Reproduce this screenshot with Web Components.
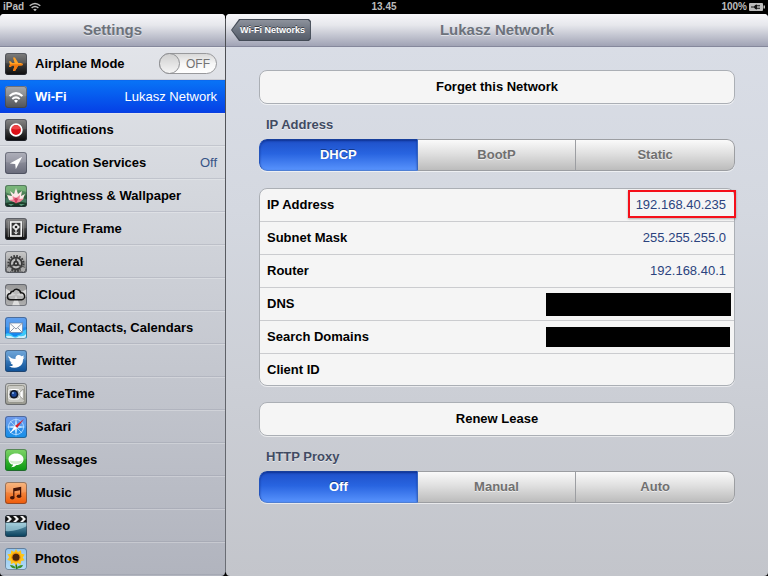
<!DOCTYPE html>
<html lang="en">
<head>
<meta charset="utf-8">
<title>Settings</title>
<style>
  html, body { height: 100%; margin: 0; }
  body {
    display: flex;
    flex-direction: column;
    overflow: hidden;
    background: #000;
    color: #000;
    font: 13px/16px "Liberation Sans", Arial, sans-serif;
  }
  .panes {
    flex: 1;
    min-height: 0;
    display: grid;
    grid-template-columns: 225px 1fr;
    gap: 1px;
    background: linear-gradient(#000 4px, #4b4d52 5px, #6b6e75 calc(100% - 4px), #000 calc(100% - 3px));
  }
</style>
</head>
<body>

<status-bar device="iPad" time="13.45" battery="100%"></status-bar>

<div class="panes">
  <settings-pane class="side" heading="Settings">
    <nav aria-label="Settings">
      <menu-row icon="airplane" label="Airplane Mode" switch></menu-row>
      <menu-row icon="wifi" label="Wi-Fi" selected>Lukasz Network</menu-row>
      <menu-row icon="notifications" label="Notifications"></menu-row>
      <menu-row icon="location" label="Location Services">Off</menu-row>
      <menu-row icon="wallpaper" label="Brightness &amp; Wallpaper"></menu-row>
      <menu-row icon="frame" label="Picture Frame"></menu-row>
      <menu-row icon="general" label="General"></menu-row>
      <menu-row icon="icloud" label="iCloud"></menu-row>
      <menu-row icon="mail" label="Mail, Contacts, Calendars"></menu-row>
      <menu-row icon="twitter" label="Twitter"></menu-row>
      <menu-row icon="facetime" label="FaceTime"></menu-row>
      <menu-row icon="safari" label="Safari"></menu-row>
      <menu-row icon="messages" label="Messages"></menu-row>
      <menu-row icon="music" label="Music"></menu-row>
      <menu-row icon="video" label="Video"></menu-row>
      <menu-row icon="photos" label="Photos"></menu-row>
    </nav>
  </settings-pane>

  <settings-pane class="detail" heading="Lukasz Network">
    <back-button slot="back">Wi-Fi Networks</back-button>
    <network-form></network-form>
  </settings-pane>
</div>

<template id="status-bar">
  <style>
    :host {
      display: grid;
      grid-template-columns: 1fr auto 1fr;
      align-items: center;
      height: 14px;
      padding: 0 3px;
      background: #000;
      color: #bcbcbc;
      font-size: 10px;
      font-weight: bold;
      line-height: 14px;
    }
    div { display: flex; align-items: center; gap: 5px; }
    .right { justify-content: flex-end; gap: 2px; }
    svg { display: block; }
  </style>
  <div>
    <span class="device"></span>
    <svg width="12" height="10" viewBox="0 0 12 10" fill="none" stroke="#bcbcbc" stroke-width="1.4">
      <path d="M.7 3.8Q6-1 11.3 3.8M2.6 5.9Q6 3 9.4 5.9"/>
      <path d="M4.2 7.4Q6 5.9 7.8 7.4L6 9.3Z" fill="#bcbcbc" stroke="none"/>
    </svg>
  </div>
  <span class="time"></span>
  <div class="right">
    <span class="battery"></span>
    <svg width="16" height="8" viewBox="0 0 16 8">
      <rect width="14" height="8" rx="1" fill="#bcbcbc"/>
      <path d="M14.5 2.5h1.5v3h-1.5z" fill="#bcbcbc"/>
      <path d="M2 3.5h3Q6 1.5 8 1.5V2.3h3v1H8v1.4h3v1H8v.8Q6 6.5 5 4.5H2z" fill="#111"/>
    </svg>
  </div>
</template>

<template id="settings-pane">
  <style>
    :host {
      display: flex;
      flex-direction: column;
      min-width: 0;
      overflow: hidden;
      border-radius: 4px;
      background: linear-gradient(#dadee7, #d4d8e0 35%, #c3c5cb);
    }
    :host(.side) { background: linear-gradient(#e5e7ec, #d5d8de 30%, #b1b4be); }
    header {
      flex: none;
      box-sizing: border-box;
      height: 33px;
      display: grid;
      grid-template-columns: 1fr auto 1fr;
      align-items: center;
      padding: 0 5px;
      border-bottom: 1px solid #85889c;
      background: linear-gradient(#f7f7fa, #e6e7ec 35%, #a0a3b5);
    }
    h1 {
      margin: 0;
      color: #6c727b;
      font-size: 15px;
      line-height: 18px;
      text-shadow: 0 1px 0 rgba(255,255,255,.5);
    }
  </style>
  <header>
    <slot name="back"><span></span></slot>
    <h1></h1>
  </header>
  <slot></slot>
</template>

<template id="back-button">
  <style>
    /* keep the arrow as wide as its text, the header cell is 1fr */
    :host { display: block; justify-self: start; }
    button {
      display: block;
      height: 22px;
      padding: 0;
      border: 0;
      background: #444b57;
      clip-path: polygon(8px 0, calc(100% - 2px) 0, 100% 2px, 100% 20px, calc(100% - 2px) 100%, 8px 100%, 0 50%);
      font: bold 9px/20px "Liberation Sans", Arial, sans-serif;
      color: #fff;
      text-shadow: 0 -1px 0 rgba(0,0,0,.5);
    }
    span {
      display: block;
      margin: 1px;
      padding: 0 5px 0 8px;
      background: linear-gradient(#8d929c, #6d7480 50%, #565d69);
      clip-path: polygon(8px 0, calc(100% - 2px) 0, 100% 2px, 100% 18px, calc(100% - 2px) 100%, 8px 100%, 0 50%);
    }
  </style>
  <button type="button"><span><slot></slot></span></button>
</template>

<template id="menu-row">
  <style>
    :host {
      display: block;
      box-sizing: border-box;
      height: 33px;
      border-top: 1px solid rgba(255,255,255,.25);
      border-bottom: 1px solid rgba(130,135,150,.25);
    }
    :host([selected]) {
      border-color: #0a6af0 transparent #0a3fe0;
      background: linear-gradient(#0873f6, #0541e6);
      color: #fff;
    }
    .row {
      display: flex;
      align-items: center;
      height: 100%;
      padding: 0 8px 0 5px;
      color: inherit;
      text-decoration: none;
    }
    .label { flex: 1; margin-left: 8px; font-weight: bold; white-space: nowrap; }
    .value { color: #385487; }
    :host([selected]) .value { color: #fff; }
  </style>
</template>

<template id="toggle-switch">
  <style>
    :host { display: block; }
    label {
      box-sizing: border-box;
      display: flex;
      align-items: center;
      width: 58px;
      height: 21px;
      border: 1px solid #98999c;
      border-radius: 11px;
      background: linear-gradient(#d8d8d8, #f6f6f6 50%, #fff);
      color: #737373;
      font-size: 12px;
    }
    input {
      appearance: none;
      flex: none;
      width: 21px;
      height: 21px;
      margin: 0 0 0 -1px;
      border: 1px solid #8f9093;
      border-radius: 50%;
      background: linear-gradient(#cfcfcf, #f5f5f5);
    }
    span { flex: 1; text-align: center; }
  </style>
  <label><input type="checkbox" role="switch" aria-label="Airplane Mode"><span>OFF</span></label>
</template>

<template id="network-form">
  <style>
    :host { display: block; padding: 23px 33px; }
    card-button { margin-bottom: 12px; }
    h2 {
      margin: 0 7px 6px;
      color: #414b63;
      font-size: 13px;
      line-height: 17px;
      text-shadow: 0 1px 0 rgba(255,255,255,.6);
    }
    .card {
      margin: 17px 0 16px;
      border: 1px solid #abafb5;
      border-radius: 8px;
      background: #f5f5f5;
      box-shadow: 0 1px 0 rgba(255,255,255,.6);
    }
    .blackout { width: 185px; height: 23px; margin-right: -5px; background: #000; }
    .blackout.small { width: 184px; height: 20px; margin-right: -4px; }
    .marked { position: relative; }
    /* marker box over the address */
    .marked::after {
      content: "";
      position: absolute;
      inset: -7px -10px -6px -8px;
      border: 2px solid #f5101a;
      box-shadow: 0 1px 2px rgba(0,0,0,.3);
    }
    input {
      width: 185px;
      padding: 0;
      border: 0;
      background: none;
      font: inherit;
      color: inherit;
      text-align: right;
      outline: none;
    }
  </style>
  <card-button>Forget this Network</card-button>
  <h2>IP Address</h2>
  <segment-control options="DHCP,BootP,Static" label="IP Address"></segment-control>
  <div class="card">
    <field-row label="IP Address"><span class="marked">192.168.40.235</span></field-row>
    <field-row label="Subnet Mask">255.255.255.0</field-row>
    <field-row label="Router">192.168.40.1</field-row>
    <field-row label="DNS"><div class="blackout"></div></field-row>
    <field-row label="Search Domains"><div class="blackout small"></div></field-row>
    <field-row label="Client ID"><input type="text" aria-label="Client ID"></field-row>
  </div>
  <card-button>Renew Lease</card-button>
  <h2>HTTP Proxy</h2>
  <segment-control options="Off,Manual,Auto" label="HTTP Proxy"></segment-control>
</template>

<template id="card-button">
  <style>
    :host { display: block; }
    button {
      display: block;
      width: 100%;
      height: 34px;
      border: 1px solid #abafb5;
      border-radius: 8px;
      background: #f5f5f5;
      box-shadow: 0 1px 0 rgba(255,255,255,.6);
      font: bold 13px/16px "Liberation Sans", Arial, sans-serif;
      color: #000;
    }
  </style>
  <button type="button"><slot></slot></button>
</template>

<template id="field-row">
  <style>
    :host {
      box-sizing: border-box;
      display: flex;
      align-items: center;
      justify-content: space-between;
      height: 33px;
      padding: 0 8px 0 7px;
      border-bottom: 1px solid #cbcccf;
    }
    :host(:last-child) { height: 31px; border-bottom: 0; }
    .label { font-weight: bold; }
    .value { color: #2b437e; }
  </style>
  <span class="label"></span>
  <div class="value"><slot></slot></div>
</template>

<template id="segment-control">
  <style>
    :host { display: block; }
    div {
      display: grid;
      grid-auto-flow: column;
      grid-auto-columns: 1fr;
      height: 32px;
      border-radius: 8px;
      overflow: hidden;
      box-shadow: 0 1px 0 rgba(255,255,255,.6);
    }
    button {
      border: solid #9c9ea2;
      border-width: 1px 1px 1px 0;
      padding: 0;
      background: linear-gradient(#fafafa, #e0e0e0 45%, #bcbcbc);
      color: #707070;
      font: bold 13px/16px "Liberation Sans", Arial, sans-serif;
      text-shadow: 0 1px 0 rgba(255,255,255,.6);
    }
    button:first-child { border-left-width: 1px; border-radius: 8px 0 0 8px; }
    button:last-child { border-radius: 0 8px 8px 0; }
    button[aria-pressed="true"] {
      border-color: #173f9c #3565c0 #4f7fd4 #2455bd;
      background: linear-gradient(#1e50c8, #2864e0 45%, #5792fc);
      box-shadow: inset 0 1px 2px rgba(0,20,90,.5);
      color: #fff;
      text-shadow: 0 -1px 0 rgba(0,0,0,.4);
    }
  </style>
  <div role="group"></div>
</template>

<script>
  (function() {
    // artwork on a 22x22 grid; bg is the tile gradient, top to bottom
    const icons = {
      airplane: {
        bg: ['#6d6d6d', '#0b0b0b'],
        art: '<path d="M4 8.300H5.600L7.200 10H9.600L8 4.500H10L13.300 9.900H15.600Q18 10 18 11.200T15.600 12.500H13.300L10 17.900H8L9.600 12.400H7.200L5.600 14.100H4L4.900 11.200Z" fill="#ffa126"/><path d="M5 11.200H18Q17.800 12.400 15.600 12.500H13.300L10 17.900H8L9.600 12.400H7.200L5.600 14.100H4Z" fill="#f3780f"/>'
      },
      wifi: {
        bg: ['#9c9ea1', '#505357'],
        art: '<g fill="none" stroke="#fff" stroke-width="2"><path d="M4.600 10Q11 4.200 17.400 10M7.300 13Q11 9.700 14.700 13"/></g><path d="M9 14.700Q11 13 13 14.700L11 16.900Z" fill="#fff"/>'
      },
      notifications: {
        bg: ['#777', '#060606'],
        art: '<circle cx="11" cy="11" r="5.800" fill="#dc1016" stroke="#fff" stroke-width="1.800"/><path d="M6.500 9.500a4.700 4.700 0 0 1 9 0Q11 11.500 6.500 9.500" fill="#f35b5b" opacity=".7"/>'
      },
      location: {
        bg: ['#a5a6b2', '#686a79'],
        art: '<path d="M17.200 4.800 4.800 11.400 10.200 12 10.800 17.200Z" fill="#fff"/>'
      },
      wallpaper: {
        bg: ['#4d9b57', '#142e22'],
        art: '<path d="M0 0H22V7L14 5 5 9 0 7Z" fill="#8ac486" opacity=".6"/><path d="M0 13 7 11 22 14V18L12 16 0 18Z" fill="#43795e"/><path d="M11 17 4 15 2 10 7 11 5 6 9 9 11 3 13 9 17 6 16 11 20 9 18 14Z" fill="#fbe9e8"/><path d="M11 18 4 15 8 14.500 7.500 11 11 13 15 10 14.500 14 19 13.500 15 17Z" fill="#ee8296"/><path d="M9 14 11 12.500 13 14 11 19Z" fill="#d23f60"/><path d="M3 19h6l-3 2zM14 19h6l-4 2z" fill="#579679"/>'
      },
      frame: {
        bg: ['#7b7b7b', '#080808'],
        art: '<path d="M3.300 3V19M18.700 3V19" stroke="#999" stroke-width=".8"/><rect x="5.800" y="4" width="10.400" height="14" fill="#333" stroke="#f4f4f4" stroke-width="1.600"/><g fill="#eee"><circle cx="11" cy="7.200" r="1.700"/><circle cx="9.100" cy="9" r="1.700"/><circle cx="12.900" cy="9" r="1.700"/><circle cx="11" cy="10.800" r="1.700"/><path d="M10.400 11h1.200v5h-1.200zM8 13.500l3 1.500 3-1.500-3 3z"/></g><circle cx="11" cy="9" r="1.300" fill="#222"/>'
      },
      general: {
        bg: ['#c4c4c4', '#7a7a7a'],
        art: '<circle cx="11" cy="12.500" r="7.600" fill="none" stroke="#3a3a3a" stroke-width="2" stroke-dasharray="1.700 1.285"/><circle cx="11" cy="12.500" r="5.900" fill="#bdbdbd" stroke="#3a3a3a" stroke-width="1.800"/><path d="M11 12.500V7M11 12.500 6.200 15.300M11 12.500 15.800 15.300" stroke="#4a4a4a" stroke-width="1.800"/><circle cx="11" cy="12.500" r="2.700" fill="#2f2f2f"/><circle cx="11" cy="12.500" r="1" fill="#ccc"/><circle cx="4" cy="18.500" r="2.700" fill="#aaa" stroke="#444" stroke-dasharray="1.200 .8"/><circle cx="18" cy="18.500" r="2.700" fill="#aaa" stroke="#444" stroke-dasharray="1.200 .8"/>'
      },
      icloud: {
        bg: ['#8b8b8b', '#b0b0b0'],
        art: '<path d="M11 11 0 4 0 13ZM11 11 22 5 22 13ZM11 11 7 22 15 22Z" fill="#f2f2f2" opacity=".7"/><path d="M5.800 15.800a3.200 3.200 0 0 1-.3-6.400 2.600 2.600 0 0 1 2.800-2.200 4 4 0 0 1 7.300 1.600 3.500 3.500 0 0 1 1 7Z" fill="#c9c9c9" fill-opacity=".5" stroke="#151515" stroke-width="1.500"/>'
      },
      mail: {
        bg: ['#4f93ec', '#0784ee'],
        art: '<path d="M0 17Q4 15 7 18T13 18Q17 18 18 14L22 12V22H0Z" fill="#3bc8fb"/><path d="M1 19Q5 18 8 20T14 19Q19 20 21 17V22H1Z" fill="#fff" opacity=".75"/><rect x="4.500" y="6" width="13" height="9.500" fill="#fbfbfb" stroke="#6880a5" stroke-width=".7"/><path d="M4.500 6 11 12 17.500 6M4.500 15.500 9 11M17.500 15.500 13 11" fill="none" stroke="#8591a5" stroke-width=".9"/>'
      },
      twitter: {
        bg: ['#5b9bd6', '#0c4f96'],
        art: '<path d="M3.200 5.500Q6.200 9 10.500 9Q10.200 5.300 13.600 5Q15.200 4.900 16.400 6.200L19 5.600 18 7.500 19.500 7.500 18 9.200Q18.200 14.500 13.800 16.800Q9 19 4 16.200Q6.500 16.500 8.300 15Q6 14.500 5.400 12.600L6.800 12.600Q4.500 11.500 4.300 9.300L5.500 9.500Q3.100 8 3.200 5.500Z" fill="#fff"/>'
      },
      facetime: {
        bg: ['#c4c4bf', '#99998f'],
        art: '<rect x="2.500" y="2.500" width="17" height="17" rx="2" fill="#c9c9c3" stroke="#96968d"/><rect x="3.800" y="6.500" width="10.500" height="9.500" rx="1.500" fill="#b5b6b2" stroke="#fff"/><path d="M14.800 9.500 18.300 6V16.500L14.800 13Z" fill="#fff" stroke="#77776f" stroke-width=".6"/><circle cx="9" cy="11.200" r="4.300" fill="#111727"/><circle cx="9" cy="11.200" r="2.600" fill="#1c479b"/><circle cx="8" cy="10" r="1" fill="#8ab7ee"/>'
      },
      safari: {
        bg: ['#5d8bea', '#1491e9'],
        art: '<circle cx="11" cy="11" r="7.600" fill="none" stroke="#b3d8ff" stroke-width=".9"/><path d="M11 1 12.400 9.600 21 11 12.400 12.400 11 21 9.600 12.400 1 11 9.600 9.600Z" fill="#b9e0ff"/><path d="M5 5 17 17M17 5 5 17" stroke="#b9e0ff" stroke-width=".8"/><path d="M19 3 9.900 9.900 12.100 12.100Z" fill="#d9202a"/><path d="M4.500 17.500 9.900 9.900 12.100 12.100Z" fill="#fff"/>'
      },
      messages: {
        bg: ['#6bcf50', '#089711'],
        art: '<path d="M11 4.500C6.500 4.500 3.500 7 3.500 10.200S6.500 16 8 15.500Q8 17.200 6 18.300 9.500 18.300 11.500 16C15.500 16 18.500 13.400 18.500 10.200 18.500 7 15.500 4.500 11 4.500Z" fill="#fff"/><path d="M4.500 11.500Q11 13 17.500 11.500Q16.500 15 11 15T4.500 11.500" fill="#d6eed0"/>'
      },
      music: {
        bg: ['#f7ae70', '#ef5907'],
        art: '<path d="M8.200 6.300 16.200 4.700V14H15V8.200L9.400 9.300V15.500H8.200Z" fill="#451407"/><ellipse cx="7.300" cy="15.700" rx="2.300" ry="1.700" fill="#451407"/><ellipse cx="14" cy="14.200" rx="2.300" ry="1.700" fill="#451407"/>'
      },
      video: {
        bg: ['#a4d7e8', '#053d59'],
        art: '<path d="M0 8H22V11Q11 17 0 16Z" fill="#b9e2ec" opacity=".6"/><rect width="22" height="7.500" fill="#111"/><path d="M1 1H4L7 4H4ZM8 1H11L14 4H11ZM15 1H18L21 4H18ZM4 4H7L4 7H1ZM11 4H14L11 7H8ZM18 4H21L18 7H15Z" fill="#f1f1f1"/>'
      },
      photos: {
        bg: ['#82bcee', '#b7def7'],
        art: '<path d="M11 13Q11 18 12 21" stroke="#277619" stroke-width="1.600" fill="none"/><path d="M11 20.500Q6 20.500 5 17 10 17 11 20.500M12 20.500Q17 20.500 18 17 12 17 12 20.500" fill="#3d9128"/><path d="M11 1 12.900 4 16 2.300 16.300 5.800 19.700 6.500 17.700 9.400 19.600 12.300 16.200 13 15.500 16.400 12.600 14.700 11 17.500 9 14.700 5.900 16.300 5.600 12.800 2.200 12 4.300 9.200 2.400 6.200 5.900 5.700 6.300 2.300 9.200 4Z" fill="#ffc316"/><circle cx="11" cy="9.300" r="4.700" fill="#ee8e0b"/><circle cx="11" cy="9.300" r="3.500" fill="#4b230c"/>'
      }
    };

    class BaseElement extends HTMLElement {
      constructor() {
        super();
        this.attachShadow({mode: 'open'});
        let template = document.getElementById(this.localName);
        if (template)
          this.shadowRoot.append(template.content.cloneNode(true));
      }

      find(selector) {
        return this.shadowRoot.querySelector(selector);
      }
    }

    customElements.define('app-icon', class extends BaseElement {
      connectedCallback() {
        let icon = icons[this.getAttribute('name')];
        this.shadowRoot.innerHTML = `
          <style>
            :host { display: block; flex: none; width: 22px; height: 22px; }
            svg { display: block; }
          </style>
          <svg width="22" height="22" viewBox="0 0 22 22" aria-hidden="true">
            <defs>
              <linearGradient id="bg" x2="0" y2="1">
                <stop stop-color="${icon.bg[0]}"/><stop offset="1" stop-color="${icon.bg[1]}"/>
              </linearGradient>
              <clipPath id="tile"><rect width="22" height="22" rx="3"/></clipPath>
            </defs>
            <g clip-path="url(#tile)">
              <rect width="22" height="22" fill="url(#bg)"/>
              <path d="M0 0H22V10Q11 12 0 10Z" fill="#fff" opacity=".12"/>
              ${icon.art}
            </g>
            <rect x=".5" y=".5" width="21" height="21" rx="2.5" fill="none" stroke="#333a48" stroke-opacity=".5"/>
          </svg>`;
      }
    });

    customElements.define('status-bar', class extends BaseElement {
      connectedCallback() {
        for (let name of ['device', 'time', 'battery'])
          this.find('.' + name).textContent = this.getAttribute(name);
      }
    });

    customElements.define('settings-pane', class extends BaseElement {
      connectedCallback() {
        this.find('h1').textContent = this.getAttribute('heading');
      }
    });

    customElements.define('toggle-switch', class extends BaseElement {
      connectedCallback() {
        let input = this.find('input');
        input.onchange = () => {
          this.find('span').textContent = input.checked ? 'ON' : 'OFF';
          this.find('label').style.flexDirection = input.checked ? 'row-reverse' : 'row';
        };
      }
    });

    customElements.define('menu-row', class extends BaseElement {
      connectedCallback() {
        let hasSwitch = this.hasAttribute('switch');
        let row = document.createElement(hasSwitch ? 'div' : 'a');
        row.className = 'row';
        if (!hasSwitch)
          row.href = '#' + this.getAttribute('icon');
        row.innerHTML = `
          <app-icon name="${this.getAttribute('icon')}"></app-icon>
          <span class="label"></span>
          ${hasSwitch ? '<toggle-switch></toggle-switch>' : '<span class="value"><slot></slot></span>'}`;
        row.querySelector('.label').textContent = this.getAttribute('label');
        this.shadowRoot.append(row);
      }
    });

    customElements.define('field-row', class extends BaseElement {
      connectedCallback() {
        this.find('.label').textContent = this.getAttribute('label');
      }
    });

    customElements.define('segment-control', class extends BaseElement {
      connectedCallback() {
        let group = this.find('div');
        group.setAttribute('aria-label', this.getAttribute('label'));
        this.getAttribute('options').split(',').forEach((text, i) => {
          let button = document.createElement('button');
          button.type = 'button';
          button.textContent = text;
          button.setAttribute('aria-pressed', i == 0);
          button.onclick = () => {
            for (let node of group.children)
              node.setAttribute('aria-pressed', node == button);
          };
          group.append(button);
        });
      }
    });

    customElements.define('back-button', class extends BaseElement {});
    customElements.define('card-button', class extends BaseElement {});
    customElements.define('network-form', class extends BaseElement {});
  })();
</script>
</body>
</html>
